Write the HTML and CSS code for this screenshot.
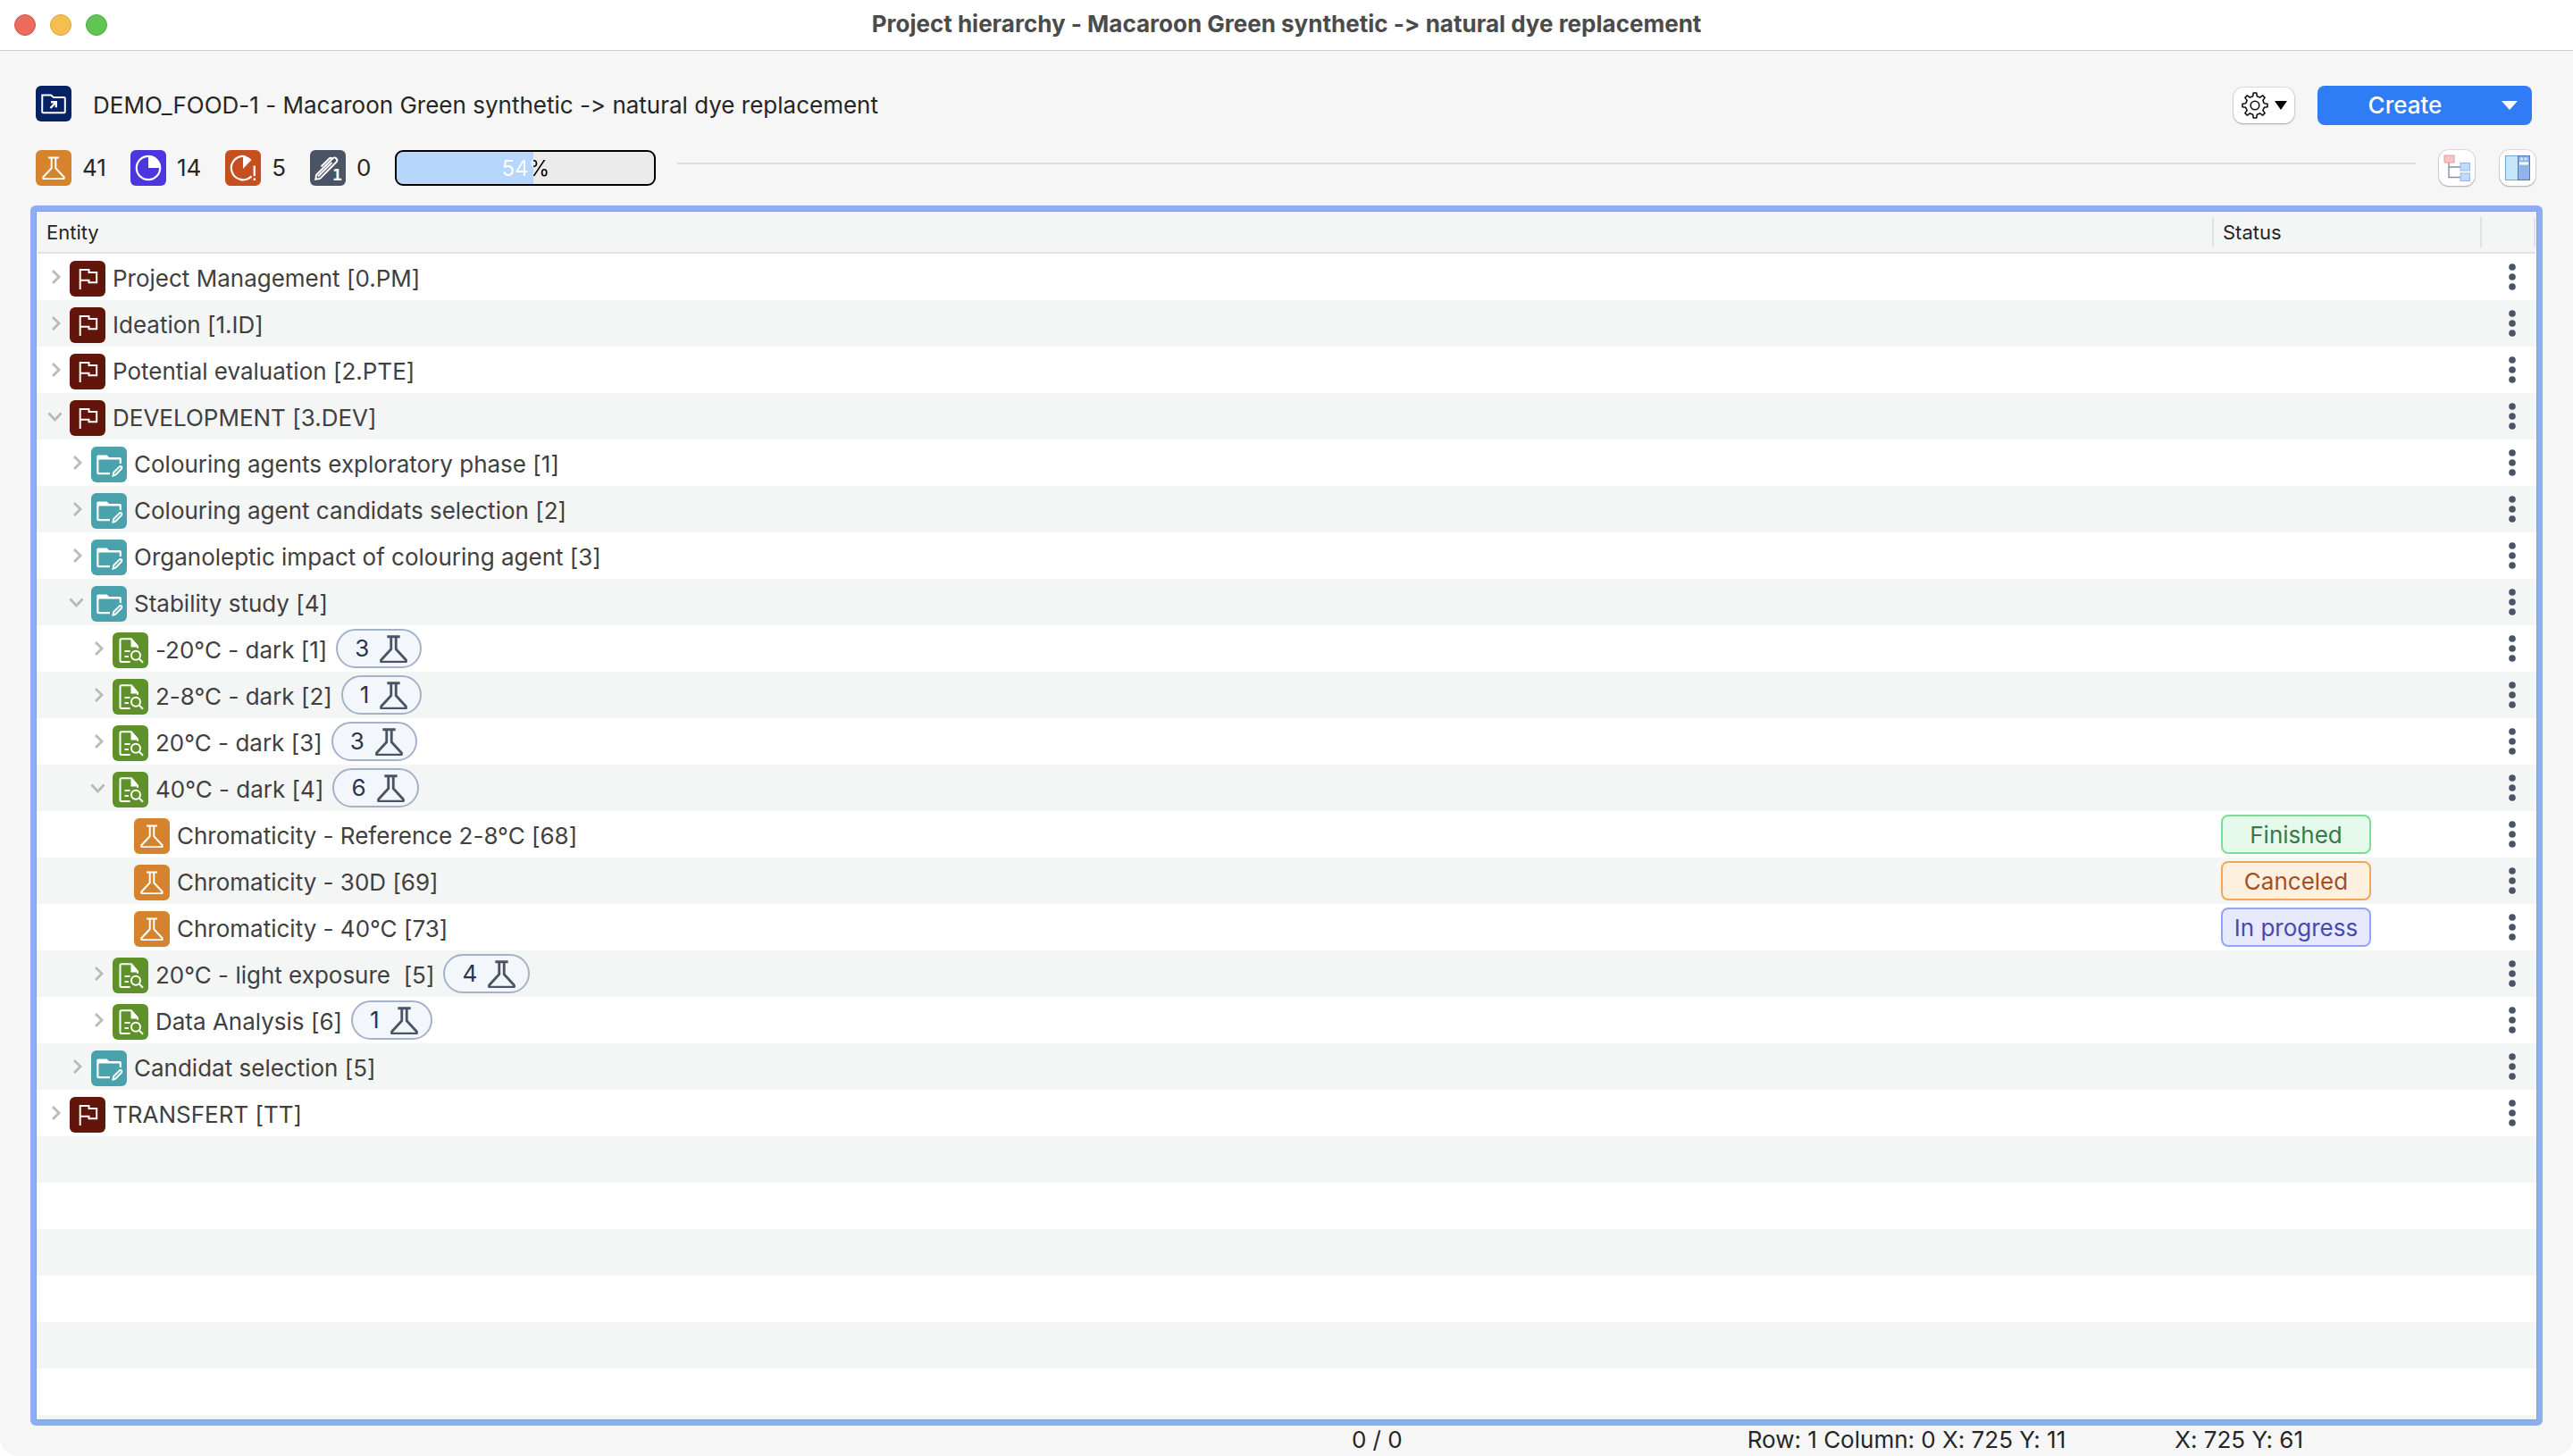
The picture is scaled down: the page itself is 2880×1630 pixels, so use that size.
FILE: index.html
```html
<!DOCTYPE html>
<html lang="en">
<head>
<meta charset="utf-8">
<title>Project hierarchy</title>
<link rel="stylesheet" href="styles.css">
</head>
<body>
<svg class="sprite" aria-hidden="true">
  <symbol id="flask" viewBox="7 7 26 26"><path d="M14 8.500h12M17.700 8.500v11.700L8.600 30q-1.200 2.300 1.200 2.300h20.400q2.400 0 1.200-2.300L22.300 20.200V8.500" fill="none" stroke="currentColor" stroke-linejoin="round"/></symbol>
  <symbol id="flag" viewBox="0 0 40 40"><path d="M11.700 32V10H21.500V13H30.200V24.300H21.500V21.700H11.700" fill="none" stroke="currentColor"/></symbol>
  <symbol id="folder" viewBox="0 0 40 40"><path d="M6.300 11q0-1.500 1.500-1.500h9.500l3 2.500h12q1.600 0 1.600 1.600V19h-2.200v-4.600H8.500V29H21v2.200H8q-1.700 0-1.700-1.700z" fill="currentColor"/><path d="M24.600 32.600l.6-3.600 6.600-6.600q1-.8 2 0t.3 2.200l-6.600 6.800z" fill="none" stroke="currentColor"/></symbol>
  <symbol id="doc" viewBox="0 0 40 40"><path d="M19.700 33H10q-1.500 0-1.500-1.500V8.800q0-1.500 1.500-1.500h11l7 8v2.400" fill="none" stroke="currentColor"/><path d="M20.500 7l8.500 9.500h-8.500z" fill="currentColor"/><path d="M13.500 21h6M13.500 27h4.500M30 29.700l4 4" stroke="currentColor"/><circle cx="26" cy="25.700" r="5" fill="none" stroke="currentColor"/></symbol>
  <symbol id="right" viewBox="0 0 18 18"><path d="M6 2l7 7-7 7" fill="none" stroke="currentColor" stroke-width="2.800"/></symbol>
  <symbol id="down" viewBox="0 0 18 18"><path d="M1.500 5.500L8.500 13l7-7.500" fill="none" stroke="currentColor" stroke-width="2.800"/></symbol>
  <symbol id="dots" viewBox="0 0 8 30"><circle cx="4" cy="4" r="3.800"/><circle cx="4" cy="15" r="3.800"/><circle cx="4" cy="26" r="3.800"/></symbol>
</svg>

<div class="window">
  <header class="titlebar">
    <div class="lights"><span class="light close"></span><span class="light minimize"></span><span class="light expand"></span></div>
    <h1>Project hierarchy - Macaroon Green synthetic -&gt; natural dye replacement</h1>
  </header>

  <section class="project">
    <svg class="tile navy" viewBox="0 0 40 40"><path d="M7.300 10.500h9.700l3 2.500h11.500q1.300 0 1.300 1.300V29q0 1.300-1.300 1.300h-23q-1.300 0-1.300-1.300z" fill="none" stroke="#fff" stroke-width="2"/><path d="M16.500 25l6-6.500M17 18.200h5.800v6" fill="none" stroke="#fff" stroke-width="2.400"/></svg>
    <h2>DEMO_FOOD-1 - Macaroon Green synthetic -&gt; natural dye replacement</h2>
    <button class="gear" aria-label="Settings">
      <svg width="30" height="30" viewBox="0 0 30 30" fill="none" stroke="#111" stroke-width="1.600" stroke-linejoin="round"><circle cx="15" cy="15" r="4.800"/><path d="M12.700 4.700L13.300 1h3.400l.6 3.700 3.300 1.400 3-2.200 2.500 2.500-2.200 3 1.400 3.300 3.700.6v3.400l-3.700.6-1.400 3.300 2.200 3-2.500 2.500-3-2.200-3.300 1.400-.6 3.700h-3.400l-.6-3.700-3.300-1.400-3 2.200-2.500-2.500 2.200-3-1.400-3.300L1 16.700v-3.400l3.700-.6 1.400-3.300-2.200-3 2.500-2.500 3 2.200z"/></svg>
      <svg width="14" height="10" viewBox="0 0 14 10"><path d="M0 0h14L7 10z"/></svg>
    </button>
    <button class="create"><span>Create</span><svg width="18" height="10" viewBox="0 0 18 10"><path d="M0 0h18L9 10z" fill="#fff"/></svg></button>
  </section>

  <section class="summary">
    <div class="count"><svg class="tile orange" viewBox="0 0 40 40"><use href="#flask" x="7" y="7" width="26" height="26"/></svg>41</div>
    <div class="count"><svg class="tile violet" viewBox="0 0 40 40"><circle cx="20" cy="20" r="13.200" fill="none" stroke="#fff" stroke-width="2.200"/><path d="M20 20V7a13 13 0 0 1 13 13z" fill="#fff"/></svg>14</div>
    <div class="count"><svg class="tile rust" viewBox="0 0 40 40"><path d="M23 7.200A13.200 13.200 0 1 0 29.500 29.300" fill="none" stroke="#fff" stroke-width="2.200"/><path d="M20 21V6.500q5.500 0 9.500 4.500z" fill="#fff"/><path d="M32.800 17.500v11.500M32.800 31.500v2.600" stroke="#fff" stroke-width="2.400"/></svg>5</div>
    <div class="count"><svg class="tile slate" viewBox="0 0 40 40"><path d="M6.300 32.700l.8-5L25.500 9.300q2-1.600 3.900.2t.2 3.800L11.200 31.900zM9 29.500L24.500 14M12.500 18.500L21.500 9.500q1.500-1.400 3.500-.2" fill="none" stroke="#fff" stroke-width="2"/><text x="25" y="34" class="pen-digit">1</text></svg>0</div>
    <div class="progress" role="progressbar" aria-valuenow="54" aria-valuemin="0" aria-valuemax="100" style="--done:53%"><span>54%</span></div>
    <div class="rule"></div>
    <button class="tool" aria-label="Tree view"><svg width="30" height="30" viewBox="0 0 30 30"><path d="M6 9v16.500h13M6 14h13" fill="none" stroke="#8590a6" stroke-width="1.400"/><rect x="1" y="1" width="11" height="8" fill="#f6c5c5" stroke="#ec9a9a"/><rect x="19" y="9.500" width="10.500" height="8.500" fill="#c3dbf5" stroke="#8fb5ee"/><rect x="19" y="21" width="10.500" height="8.500" fill="#c3dbf5" stroke="#8fb5ee"/></svg></button>
    <button class="tool" aria-label="Side panel"><svg width="30" height="30" viewBox="0 0 30 30"><rect x="1.500" y="1.500" width="14" height="27" fill="#c6e6fc" stroke="#7ba3cf"/><rect x="15.500" y="1.500" width="13" height="27" fill="#92b3e9" stroke="#5579b5"/><path d="M17 10h10" stroke="#fff" stroke-width="3"/><circle cx="19.500" cy="5" r="1.700" fill="#cfe6fc"/><circle cx="24" cy="5" r="1.700" fill="#cfe6fc"/></svg></button>
  </section>

  <main class="tree">
    <table>
      <colgroup><col><col class="col-status"><col class="col-menu"></colgroup>
      <thead><tr><th scope="col"><span>Entity</span></th><th scope="col"><span>Status</span></th><th scope="col"><span></span></th></tr></thead>
      <tbody>
        <tr><td><div class="node"><button aria-label="Expand"><svg><use href="#right"/></svg></button><svg class="tile maroon"><use href="#flag"/></svg>Project Management [0.PM]</div></td><td></td><td><button class="menu" aria-label="Menu"><svg><use href="#dots"/></svg></button></td></tr>
        <tr><td><div class="node"><button aria-label="Expand"><svg><use href="#right"/></svg></button><svg class="tile maroon"><use href="#flag"/></svg>Ideation [1.ID]</div></td><td></td><td><button class="menu" aria-label="Menu"><svg><use href="#dots"/></svg></button></td></tr>
        <tr><td><div class="node"><button aria-label="Expand"><svg><use href="#right"/></svg></button><svg class="tile maroon"><use href="#flag"/></svg>Potential evaluation [2.PTE]</div></td><td></td><td><button class="menu" aria-label="Menu"><svg><use href="#dots"/></svg></button></td></tr>
        <tr><td><div class="node"><button aria-label="Collapse"><svg><use href="#down"/></svg></button><svg class="tile maroon"><use href="#flag"/></svg>DEVELOPMENT [3.DEV]</div></td><td></td><td><button class="menu" aria-label="Menu"><svg><use href="#dots"/></svg></button></td></tr>
        <tr><td><div class="node level-1"><button aria-label="Expand"><svg><use href="#right"/></svg></button><svg class="tile teal"><use href="#folder"/></svg>Colouring agents exploratory phase [1]</div></td><td></td><td><button class="menu" aria-label="Menu"><svg><use href="#dots"/></svg></button></td></tr>
        <tr><td><div class="node level-1"><button aria-label="Expand"><svg><use href="#right"/></svg></button><svg class="tile teal"><use href="#folder"/></svg>Colouring agent candidats selection [2]</div></td><td></td><td><button class="menu" aria-label="Menu"><svg><use href="#dots"/></svg></button></td></tr>
        <tr><td><div class="node level-1"><button aria-label="Expand"><svg><use href="#right"/></svg></button><svg class="tile teal"><use href="#folder"/></svg>Organoleptic impact of colouring agent [3]</div></td><td></td><td><button class="menu" aria-label="Menu"><svg><use href="#dots"/></svg></button></td></tr>
        <tr><td><div class="node level-1"><button aria-label="Collapse"><svg><use href="#down"/></svg></button><svg class="tile teal"><use href="#folder"/></svg>Stability study [4]</div></td><td></td><td><button class="menu" aria-label="Menu"><svg><use href="#dots"/></svg></button></td></tr>
        <tr><td><div class="node level-2"><button aria-label="Expand"><svg><use href="#right"/></svg></button><svg class="tile green"><use href="#doc"/></svg>-20°C - dark [1]<span class="pill">3<svg><use href="#flask"/></svg></span></div></td><td></td><td><button class="menu" aria-label="Menu"><svg><use href="#dots"/></svg></button></td></tr>
        <tr><td><div class="node level-2"><button aria-label="Expand"><svg><use href="#right"/></svg></button><svg class="tile green"><use href="#doc"/></svg>2-8°C - dark [2]<span class="pill">1<svg><use href="#flask"/></svg></span></div></td><td></td><td><button class="menu" aria-label="Menu"><svg><use href="#dots"/></svg></button></td></tr>
        <tr><td><div class="node level-2"><button aria-label="Expand"><svg><use href="#right"/></svg></button><svg class="tile green"><use href="#doc"/></svg>20°C - dark [3]<span class="pill">3<svg><use href="#flask"/></svg></span></div></td><td></td><td><button class="menu" aria-label="Menu"><svg><use href="#dots"/></svg></button></td></tr>
        <tr><td><div class="node level-2"><button aria-label="Collapse"><svg><use href="#down"/></svg></button><svg class="tile green"><use href="#doc"/></svg>40°C - dark [4]<span class="pill">6<svg><use href="#flask"/></svg></span></div></td><td></td><td><button class="menu" aria-label="Menu"><svg><use href="#dots"/></svg></button></td></tr>
        <tr><td><div class="node leaf"><svg class="tile orange" viewBox="0 0 40 40"><use href="#flask" x="7" y="7" width="26" height="26"/></svg>Chromaticity - Reference 2-8°C [68]</div></td><td><span class="status finished">Finished</span></td><td><button class="menu" aria-label="Menu"><svg><use href="#dots"/></svg></button></td></tr>
        <tr><td><div class="node leaf"><svg class="tile orange" viewBox="0 0 40 40"><use href="#flask" x="7" y="7" width="26" height="26"/></svg>Chromaticity - 30D [69]</div></td><td><span class="status canceled">Canceled</span></td><td><button class="menu" aria-label="Menu"><svg><use href="#dots"/></svg></button></td></tr>
        <tr><td><div class="node leaf"><svg class="tile orange" viewBox="0 0 40 40"><use href="#flask" x="7" y="7" width="26" height="26"/></svg>Chromaticity - 40°C [73]</div></td><td><span class="status running">In progress</span></td><td><button class="menu" aria-label="Menu"><svg><use href="#dots"/></svg></button></td></tr>
        <tr><td><div class="node level-2"><button aria-label="Expand"><svg><use href="#right"/></svg></button><svg class="tile green"><use href="#doc"/></svg>20°C - light exposure&nbsp; [5]<span class="pill">4<svg><use href="#flask"/></svg></span></div></td><td></td><td><button class="menu" aria-label="Menu"><svg><use href="#dots"/></svg></button></td></tr>
        <tr><td><div class="node level-2"><button aria-label="Expand"><svg><use href="#right"/></svg></button><svg class="tile green"><use href="#doc"/></svg>Data Analysis [6]<span class="pill">1<svg><use href="#flask"/></svg></span></div></td><td></td><td><button class="menu" aria-label="Menu"><svg><use href="#dots"/></svg></button></td></tr>
        <tr><td><div class="node level-1"><button aria-label="Expand"><svg><use href="#right"/></svg></button><svg class="tile teal"><use href="#folder"/></svg>Candidat selection [5]</div></td><td></td><td><button class="menu" aria-label="Menu"><svg><use href="#dots"/></svg></button></td></tr>
        <tr><td><div class="node"><button aria-label="Expand"><svg><use href="#right"/></svg></button><svg class="tile maroon"><use href="#flag"/></svg>TRANSFERT [TT]</div></td><td></td><td><button class="menu" aria-label="Menu"><svg><use href="#dots"/></svg></button></td></tr>
      </tbody>
    </table>
  </main>

  <footer class="statusbar"><span class="selection">0 / 0</span><span class="cell">Row: 1 Column: 0 X: 725 Y: 11</span><span>X: 725 Y: 61</span></footer>
</div>
</body>
</html>
```
FILE: styles.css
```css
* { box-sizing: border-box; }

body {
  margin: 0;
  background: #fff;
  color: #262626;
  font: 26px/32px Inter, "Liberation Sans", sans-serif;
  font-feature-settings: "calt" 0;
}

button {
  border: 0;
  padding: 0;
  background: none;
  color: inherit;
  font: inherit;
}

svg { display: block; flex: none; }
.sprite { position: absolute; width: 0; height: 0; }

.window {
  display: flex;
  flex-direction: column;
  min-height: 100vh;
  background: #f6f6f6;
  border-radius: 0 0 20px 20px;
}

/* Title bar */
.titlebar {
  display: grid;
  grid-template-columns: 1fr auto 1fr;
  align-items: center;
  height: 57px;
  background: #fff;
  border-bottom: 1px solid #cfcfcf;
  padding: 0 16px;
}
.titlebar h1 {
  margin: 0 0 2px;
  font-size: 26px;
  font-weight: 700;
  color: #4b4b4b;
}
.lights { display: flex; gap: 16px; }
.light { width: 24px; height: 24px; border-radius: 50%; border: 1px solid; }
.close { background: #ec6a5e; border-color: #d65548; }
.minimize { background: #f4bf4f; border-color: #dba63a; }
.expand { background: #61c554; border-color: #4cae3e; }

/* Coloured icon tiles */
.tile { width: 40px; height: 40px; border-radius: 6px; color: #fff; stroke-width: 2px; }
.navy { background: #072365; }
.orange { background: #d5832d; }
.violet { background: #4c37de; }
.rust { background: #c64f20; }
.slate { background: #4a5464; }
.maroon { background: #62150b; }
.teal { background: #4aa2ac; }
.green { background: #5e9129; }
.pen-digit { font: bold 18px "DejaVu Sans Mono", monospace; fill: #fff; }

/* Project heading */
.project {
  display: flex;
  align-items: center;
  height: 44px;
  margin: 39px 46px 0 40px;
}
.project .tile { align-self: flex-start; }
.project h2 {
  flex: 1;
  margin: 0 0 0 24px;
  font-size: 26px;
  font-weight: 400;
}
.gear, .tool {
  display: flex;
  align-items: center;
  justify-content: center;
  height: 40px;
  border-radius: 11px;
  background: #fff;
  box-shadow: 0 0 1px 1px #0000001a, 0 1px 2px #00000040;
}
.gear { width: 68px; gap: 7px; margin-right: 26px; }
.tool { width: 40px; }
.create {
  display: flex;
  align-items: center;
  width: 240px;
  height: 44px;
  padding-right: 16px;
  border-radius: 8px;
  background: #307cf6;
  color: #fff;
  font-weight: 500;
}
.create span { flex: 1; padding-right: 10px; text-align: center; }

/* Counters, progress and view buttons */
.summary {
  display: flex;
  align-items: center;
  height: 40px;
  margin: 28px 42px 22px 40px;
}
.count { display: flex; align-items: center; gap: 12px; margin-right: 27px; }
.progress {
  width: 292px;
  height: 40px;
  border: 2px solid #000;
  border-radius: 9px;
  background: linear-gradient(to right, #b7d6fc var(--done), #ebebeb var(--done));
  font-size: 24px;
  line-height: 38px;
  text-align: center;
}
.progress span {
  display: block;
  background: linear-gradient(to right, #fff var(--done), #000 var(--done));
  background-clip: text;
  color: transparent;
}
.rule { flex: 1; height: 2px; margin: 0 26px 10px 24px; background: #dedede; }
.tool + .tool { margin-left: 28px; }

/* Tree table: stripes continue below the last entity */
.tree {
  flex: 1;
  margin: 0 34px;
  border: 6px solid #8eaef3;
  border-radius: 6px;
  outline: 1px solid #7f9fe0;
  outline-offset: -7px;
  padding: 2px;
  background: repeating-linear-gradient(#fff 0 52px, #f4f5f5 52px 104px) 0 48px;
}
table { width: 100%; border-collapse: separate; border-spacing: 0; table-layout: fixed; }
.col-status { width: 300px; }
.col-menu { width: 60px; }
th {
  height: 46px;
  padding: 0;
  background: #f4f5f5;
  border-bottom: 2px solid #e2e2e2;
  font-size: 22px;
  font-weight: 400;
  text-align: left;
}
th span {
  display: block;
  height: 34px;
  padding-left: 10px;
  border-right: 2px solid #e2e2e2;
  line-height: 34px;
}
td { height: 52px; padding: 0; }

.node {
  display: flex;
  align-items: center;
  height: 52px;
  padding: 4px 0 0 11px;
  color: #404040;
}
.node button { width: 18px; height: 18px; margin: 0 7px 4px 0; color: #b9b9b9; }
.node button svg { width: 18px; height: 18px; }
.node .tile { margin-right: 8px; }
.level-1 { padding-left: 35px; }
.level-2 { padding-left: 59px; }
.leaf { padding-left: 108px; }

.pill {
  display: flex;
  align-items: center;
  gap: 12px;
  height: 44px;
  margin: 0 0 4px 10px;
  padding: 0 14px 0 19px;
  border: 2px solid #a4b2c8;
  border-radius: 22px;
  background: #f3f7fc;
  color: #2a3550;
}
.pill svg { width: 31px; height: 31px; color: #4a5464; stroke-width: 2.4; }

.status {
  display: block;
  width: 168px;
  height: 44px;
  margin-left: 8px;
  border: 2px solid;
  border-radius: 8px;
  line-height: 42px;
  text-align: center;
}
.finished { background: #e6faec; border-color: #7cdc97; color: #36794a; }
.canceled { background: #fef0df; border-color: #f3a55a; color: #a54d24; }
.running { background: #e6eafc; border-color: #95a3f3; color: #4649b0; }

.menu { display: block; margin-left: 30px; }
.menu svg { width: 8px; height: 30px; fill: #4a5464; }

/* Status bar */
.statusbar {
  display: flex;
  justify-content: flex-end;
  height: 34px;
  padding-right: 302px;
}
.selection { margin-right: 386px; }
.cell { margin-right: 122px; }
```
